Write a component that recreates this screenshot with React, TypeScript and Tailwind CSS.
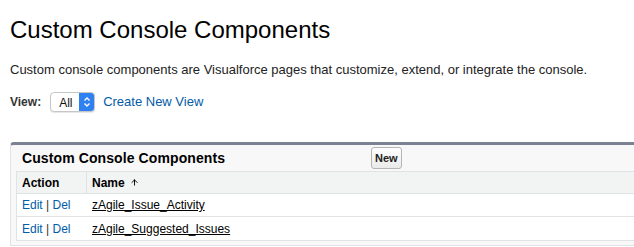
import { ArrowUp } from 'lucide-react';

const rows = ['zAgile_Issue_Activity', 'zAgile_Suggested_Issues'];

export default function App() {
  return (
    <div className="w-[634px] h-[247px] overflow-hidden bg-white font-['Liberation_Sans',Arial,sans-serif] text-black">
      <div className="pl-[10px] pt-[15px]">
        <h1 className="text-[24px] leading-[30px] font-normal">Custom Console Components</h1>
        <p className="mt-[17px] text-[13px] leading-[16px] text-[#222]">Custom console components are Visualforce pages that customize, extend, or integrate the console.</p>

        <div className="mt-[13px] flex items-center h-[22px]">
          <span className="text-[12px] font-bold text-[#333] mr-[9px]">View:</span>
          <div className="flex h-[20px] w-[45px] rounded-[4px] border border-[#c6c6c6] bg-white overflow-hidden shadow-[0_1px_1px_rgba(0,0,0,0.1)]">
            <span className="flex-1 pl-[8px] text-[12px] leading-[20px] text-[#111]">All</span>
            <span className="w-[15px] bg-[#2f80f0] flex items-center justify-center">
              <svg width="8" height="12" viewBox="0 0 8 12" fill="none" stroke="white" strokeWidth="1.4">
                <path d="M1.5 4.5 L4 2 L6.5 4.5" />
                <path d="M1.5 7.5 L4 10 L6.5 7.5" />
              </svg>
            </span>
          </div>
          <a className="ml-[8px] text-[13px] text-[#015ba7]">Create New View</a>
        </div>
      </div>

      {/* list panel */}
      <div className="ml-[10px] mt-[29px] w-[640px] rounded-t-[4px] border-t-[3px] border-[#7b8294] border-l border-l-[#e0e3e5] border-b border-b-[#e0e3e5] bg-[#f8f8f8] pb-[4px]">
        <div className="flex items-center h-[26px] pl-[11px]">
          <h2 className="text-[14px] font-bold w-[349px] tracking-[0.1px]">Custom Console Components</h2>
          <button className="h-[22px] px-[3px] rounded-[3px] border border-[#b5b5b5] bg-gradient-to-b from-white to-[#eaeaea] text-[11px] font-bold text-[#222]">New</button>
        </div>
        <div className="ml-[5px] border border-[#e0e3e5] border-r-0 bg-white">
          <div className="flex h-[22px] bg-[#f2f3f3] border-b border-[#e0e3e5] text-[12px] font-bold text-[#000]">
            <div className="w-[70px] pl-[5px] flex items-center border-r border-[#e0e3e5]">Action</div>
            <div className="flex-1 pl-[5px] flex items-center gap-[5px]">
              Name
              <ArrowUp className="w-[9px] h-[9px]" strokeWidth={2.5} />
            </div>
          </div>
          {rows.map((name, i) => (
            <div key={name} className={`flex h-[23px] items-center text-[12px] ${i < rows.length - 1 ? 'border-b border-[#e3e3e3]' : ''}`}>
              <div className="w-[70px] pl-[5px] text-[#015ba7]">
                Edit <span className="text-[#333]">|</span> Del
              </div>
              <div className="flex-1 pl-[5px]">
                <a className="underline text-black">{name}</a>
              </div>
            </div>
          ))}
        </div>
      </div>
    </div>
  );
}
